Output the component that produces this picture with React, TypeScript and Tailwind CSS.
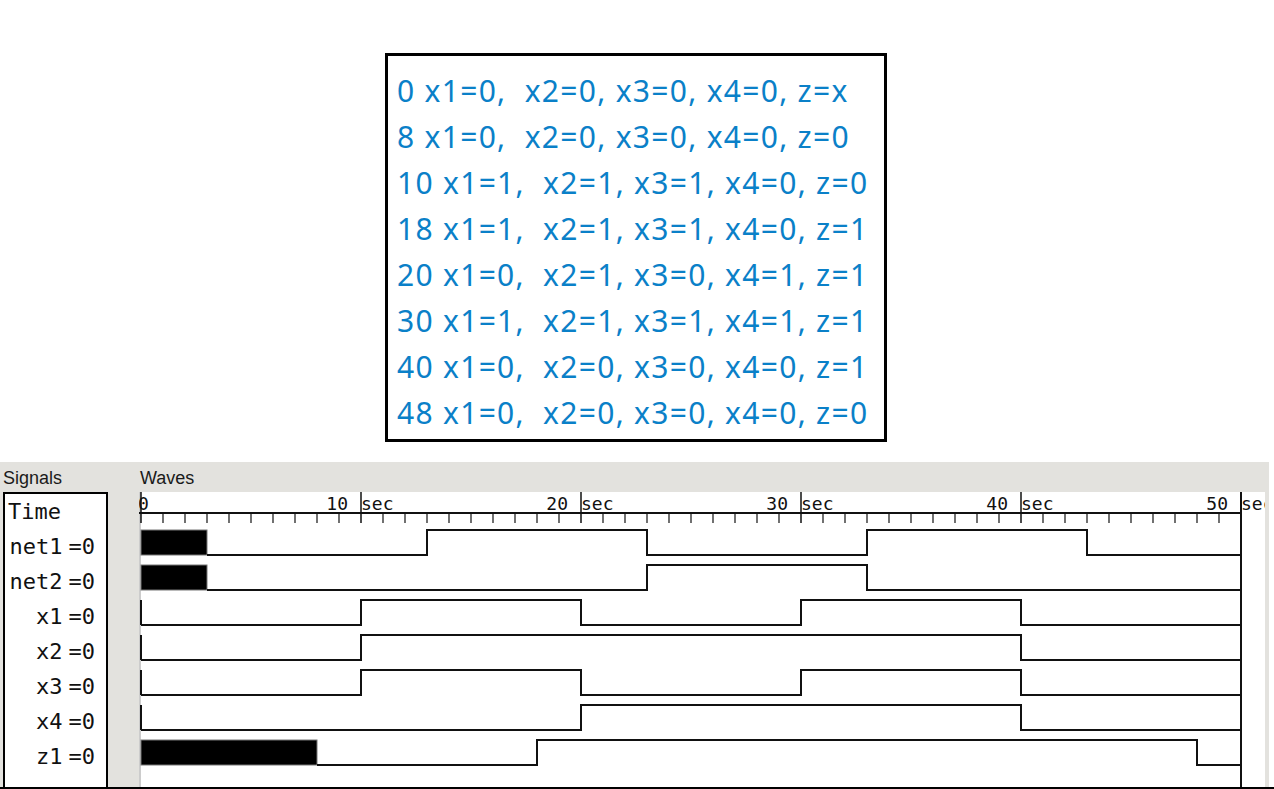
import React from 'react';

type Level = 0 | 1 | 'x';
type Seg = [number, number, Level];

const rows: { name: string; segs: Seg[] }[] = [
    {name: 'net1', segs: [[0, 3, 'x'], [3, 13, 0], [13, 23, 1], [23, 33, 0], [33, 43, 1], [43, 50, 0]]},
    {name: 'net2', segs: [[0, 3, 'x'], [3, 23, 0], [23, 33, 1], [33, 50, 0]]},
    {name: 'x1', segs: [[0, 10, 0], [10, 20, 1], [20, 30, 0], [30, 40, 1], [40, 50, 0]]},
    {name: 'x2', segs: [[0, 10, 0], [10, 40, 1], [40, 50, 0]]},
    {name: 'x3', segs: [[0, 10, 0], [10, 20, 1], [20, 30, 0], [30, 40, 1], [40, 50, 0]]},
    {name: 'x4', segs: [[0, 20, 0], [20, 40, 1], [40, 50, 0]]},
    {name: 'z1', segs: [[0, 8, 'x'], [8, 18, 0], [18, 48, 1], [48, 50, 0]]},
];

const lines = [
    '0 x1=0,  x2=0, x3=0, x4=0, z=x',
    '8 x1=0,  x2=0, x3=0, x4=0, z=0',
    '10 x1=1,  x2=1, x3=1, x4=0, z=0',
    '18 x1=1,  x2=1, x3=1, x4=0, z=1',
    '20 x1=0,  x2=1, x3=0, x4=1, z=1',
    '30 x1=1,  x2=1, x3=1, x4=1, z=1',
    '40 x1=0,  x2=0, x3=0, x4=0, z=1',
    '48 x1=0,  x2=0, x3=0, x4=0, z=0',
];

const X = (t: number) => 2 + 22 * t;
const mono = "'DejaVu Sans Mono', 'Liberation Mono', monospace";

const Wave = ({segs, i}: { segs: Seg[]; i: number }) => {
    const hi = 38 + 35 * i;
    const lo = hi + 25;
    let d = '';
    let prev: number | null = null;
    const blocks: React.ReactNode[] = [];
    segs.forEach(([t0, t1, v], k) => {
        if (v === 'x') {
            blocks.push(<rect key={k} x={X(t0)} y={hi} width={X(t1) - X(t0)} height={lo - hi} fill="#000" stroke="#777" strokeWidth={1}/>);
            prev = null;
            return;
        }
        const y = v ? hi : lo;
        if (prev === null) {
            if (t0 === 0) d += `M${X(0)} ${hi} L${X(0)} ${lo} M${X(0)} ${y} `;
            else d += `M${X(t0)} ${y} `;
        } else {
            d += `L${X(t0)} ${y} `;
        }
        d += `L${X(t1)} ${y} `;
        prev = y;
    });
    return (
        <g>
            {blocks}
            <path d={d} fill="none" stroke="#111" strokeWidth={2}/>
        </g>
    );
};

const Waves = () => {
    const ticks = Array.from({length: 51}, (_, t) => t);
    return (
        <svg width={1126} height={295} className="block bg-white" style={{fontFamily: mono}}>
            <line x1={1} y1={0} x2={1} y2={295} stroke="#999" strokeWidth={1}/>
            <line x1={0} y1={21} x2={X(50)} y2={21} stroke="#111" strokeWidth={2}/>
            {ticks.map(t => (
                <line key={t} x1={X(t)} y1={t % 10 === 0 ? 0 : 21} x2={X(t)} y2={31} stroke="#111" strokeWidth={t % 10 === 0 ? 1.5 : 1.2}/>
            ))}
            <text x={-1} y={18} fontSize={18} fill="#111">0</text>
            {[10, 20, 30, 40, 50].map(t => (
                <g key={t}>
                    <text x={X(t) - 13} y={18} fontSize={18} fill="#111" textAnchor="end">{t}</text>
                    <text x={X(t)} y={18} fontSize={18} fill="#111">sec</text>
                </g>
            ))}
            <line x1={X(50)} y1={0} x2={X(50)} y2={295} stroke="#111" strokeWidth={2}/>
            {rows.map((r, i) => <Wave key={r.name} segs={r.segs} i={i}/>)}
        </svg>
    );
};

export default function App() {
    return (
        <div className="w-[1274px] h-[789px] bg-white overflow-hidden">
            <div className="pt-[53px] pl-[385px]">
                <div className="w-[502px] h-[389px] border-[3px] border-black pt-[12px] pl-[9px] text-[#0a80c8]"
                     style={{fontFamily: "'Noto Sans', sans-serif"}}>
                    {lines.map(l => (
                        <div key={l} className="whitespace-pre text-[30px] leading-[46px] tracking-[1.3px]">{l}</div>
                    ))}
                </div>
            </div>

            <div className="mt-[20px] flex h-[327px] w-[1274px] border-b-2 border-black">
                <div className="flex w-[1269px] bg-[#e3e2de]">
                    <div className="w-[139px] flex flex-col px-[3px]">
                        <div className="h-[30px] pt-[6px] text-[18px] leading-[20px] text-[#1a1a1a]"
                             style={{fontFamily: "'Liberation Sans', Arial, sans-serif"}}>Signals
                        </div>
                        <div className="w-[105px] flex-1 bg-white border-2 border-black border-b-0 text-[22px] leading-[35px] text-[#111]"
                             style={{fontFamily: mono}}>
                            <div className="pl-[3px]">Time</div>
                            {rows.map(r => (
                                <div key={r.name} className="flex justify-end pr-[11px]">
                                    <span>{r.name}</span>
                                    <span className="ml-[6px]">=0</span>
                                </div>
                            ))}
                        </div>
                    </div>
                    <div className="flex flex-col">
                        <div className="h-[30px] pt-[6px] pl-[1px] text-[18px] leading-[20px] text-[#1a1a1a]"
                             style={{fontFamily: "'Liberation Sans', Arial, sans-serif"}}>Waves
                        </div>
                        <Waves/>
                    </div>
                </div>
            </div>
        </div>
    );
}
